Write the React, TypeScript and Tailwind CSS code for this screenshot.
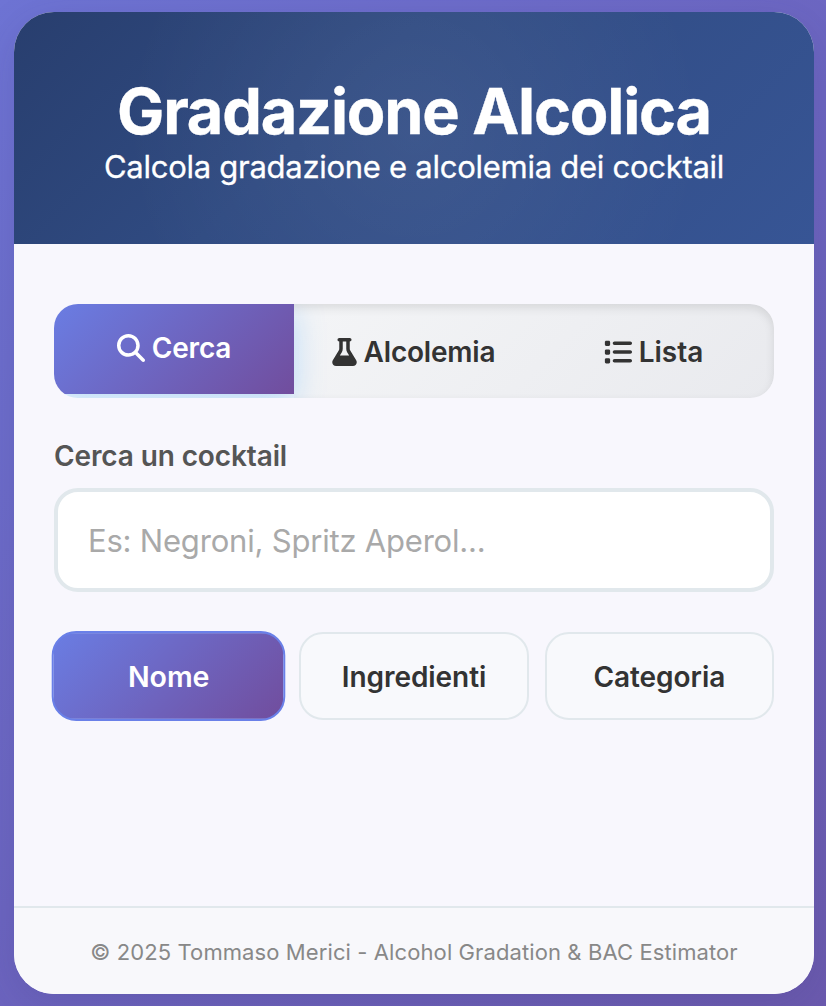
import { FaFlask, FaList, FaMagnifyingGlass } from "react-icons/fa6";

export default function App() {
  return (
    <div className="h-[1006px] w-[826px] overflow-hidden bg-[linear-gradient(135deg,#6e74d4_0%,#6c65c0_50%,#6b5aae_100%)] pt-[12px] pl-[14px] font-['Inter',sans-serif]">
      <main className="flex h-[982px] w-[800px] flex-col overflow-hidden rounded-[40px] bg-[#f8f7fd] shadow-[0_10px_40px_rgba(50,50,110,0.15)]">
        <header className="h-[232px] bg-[radial-gradient(circle_at_50%_50%,rgba(255,255,255,0.06)_0%,transparent_70%),linear-gradient(135deg,#283e6e_0%,#304b82_40%,#375595_100%)] pt-[60px] text-center text-white">
          <h1 className="h-[77px] text-[63px] leading-[79px] font-bold tracking-[-1.2px] whitespace-nowrap [-webkit-text-stroke:0.4px_white]">Gradazione Alcolica</h1>
          <p className="text-[31px] leading-[35px] tracking-[-0.27px] whitespace-nowrap [-webkit-text-stroke:0.3px_white]">Calcola gradazione e alcolemia dei cocktail</p>
        </header>
        <section className="flex-1 px-10 pt-[60px]">
          <nav className="relative grid h-[94px] grid-cols-3 overflow-hidden rounded-[24px] bg-[linear-gradient(135deg,#f8f9fa_0%,#e9eaee_100%)] text-[28px] font-semibold tracking-[-0.2px] text-[#333]">
            <button className="flex h-[90px] items-center justify-center gap-[7px] bg-[linear-gradient(135deg,#6a7de3_0%,#714d9d_100%)] pb-[3px] text-white shadow-[0_8px_30px_rgba(79,172,254,0.35)]">
              <FaMagnifyingGlass className="size-[28px]" />
              <span>Cerca</span>
            </button>
            <button className="flex items-center justify-center gap-[7px] pt-[1px] pr-px">
              <FaFlask className="h-[28px] w-[25px]" />
              <span className="tracking-[-0.2px]">Alcolemia</span>
            </button>
            <button className="flex items-center justify-center gap-[7px] pt-[1px] pr-px">
              <FaList className="size-[28px]" />
              <span className="tracking-[0px]">Lista</span>
            </button>
            <div className="pointer-events-none absolute inset-y-0 right-0 left-[240px] overflow-hidden">
              <div className="absolute inset-y-0 right-0 -left-[240px] rounded-[24px] shadow-[inset_0_4px_10px_rgba(0,0,0,0.1)]" />
            </div>
          </nav>
          <label htmlFor="cocktail" className="mt-[40px] block h-[50px] text-[28px] leading-[36px] font-semibold tracking-[-0.12px] text-[#555]">Cerca un cocktail</label>
          <input id="cocktail" placeholder="Es: Negroni, Spritz Aperol..." className="block h-[104px] w-full rounded-[24px] border-4 border-[#e1e8ec] bg-white px-[30px] text-[31px] tracking-[-0.2px] outline-none placeholder:text-[#a9a9a9]" />
          <div className="mt-[40px] grid grid-cols-3 gap-4 text-[28px] font-semibold tracking-[-0.05px] text-[#333]">
            <button className="h-[88px] scale-[1.02] rounded-[24px] border-2 border-[#6a80e8] bg-[linear-gradient(135deg,#6a7de3_0%,#714d9d_100%)] pt-[2px] text-white">Nome</button>
            <button className="h-[88px] rounded-[24px] border-2 border-[#e1e8ec] bg-[#f8f9fc] pt-[2px]">Ingredienti</button>
            <button className="h-[88px] rounded-[24px] border-2 border-[#e1e8ec] bg-[#f8f9fc] pt-[2px]">Categoria</button>
          </div>
        </section>
        <footer className="h-[88px] border-t-2 border-[#e1e8ec] bg-[#f8f8fb] pt-[30px] text-center text-[22px] leading-[28px] tracking-[0.1px] whitespace-nowrap text-[#888]">
          © 2025 Tommaso Merici - Alcohol Gradation &amp; BAC Estimator
        </footer>
      </main>
    </div>
  );
}
